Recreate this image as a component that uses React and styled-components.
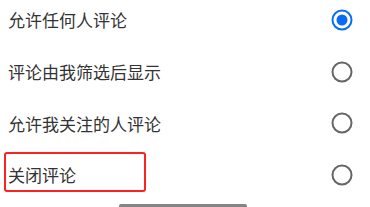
import { useState } from "react";
import styled, { createGlobalStyle } from "styled-components";

const GlobalStyle = createGlobalStyle`
    html, body {
        margin: 0;
        padding: 0;
        background: #fff;
        overflow: hidden;
    }
    body {
        font-family: "Noto Sans CJK SC", "Noto Sans", sans-serif;
    }
`;

const options = [
    "允许任何人评论",
    "评论由我筛选后显示",
    "允许我关注的人评论",
    "关闭评论"
];

const Radio = ({ checked }) => (
    <RadioIcon width="22" height="22" viewBox="0 0 22 22">
        <circle
            cx="11"
            cy="11"
            r="9.5"
            fill="none"
            stroke={checked ? "#0a6cf5" : "#666"}
            strokeWidth="2"
        />
        {checked && <circle cx="11" cy="11" r="5.5" fill="#0a6cf5" />}
    </RadioIcon>
);

export default function App() {
    const [selected, setSelected] = useState(0);

    return (
        <Page>
            <GlobalStyle />
            <List>
                {options.map((label, index) => (
                    <Row key={label} onClick={() => setSelected(index)}>
                        <Label>{label}</Label>
                        <Radio checked={selected === index} />
                        {index === options.length - 1 && <Highlight />}
                    </Row>
                ))}
            </List>
            <HomeBar />
        </Page>
    );
}

const Page = styled.div`
    width: 370px;
    height: 207px;
    overflow: hidden;
    display: flex;
    flex-direction: column;
`;

const List = styled.div`
    margin-top: -6px;
    display: flex;
    flex-direction: column;
`;

const Row = styled.div`
    position: relative;
    height: 51.7px;
    display: flex;
    align-items: center;
    justify-content: space-between;
    padding: 0 17px 0 8px;
    cursor: pointer;
`;

const Label = styled.span`
    font-size: 17px;
    color: #333;
    line-height: 1;
`;

const RadioIcon = styled.svg`
    display: block;
    flex-shrink: 0;
`;

const Highlight = styled.div`
    position: absolute;
    left: 4px;
    top: 3px;
    width: 142px;
    height: 40px;
    box-sizing: border-box;
    border: 2px solid #ff2121;
    border-radius: 3px;
    pointer-events: none;
`;

const HomeBar = styled.div`
    margin: auto 0 0 119px;
    width: 128px;
    height: 3px;
    background: #858585;
    border-radius: 2px 2px 0 0;
`;
